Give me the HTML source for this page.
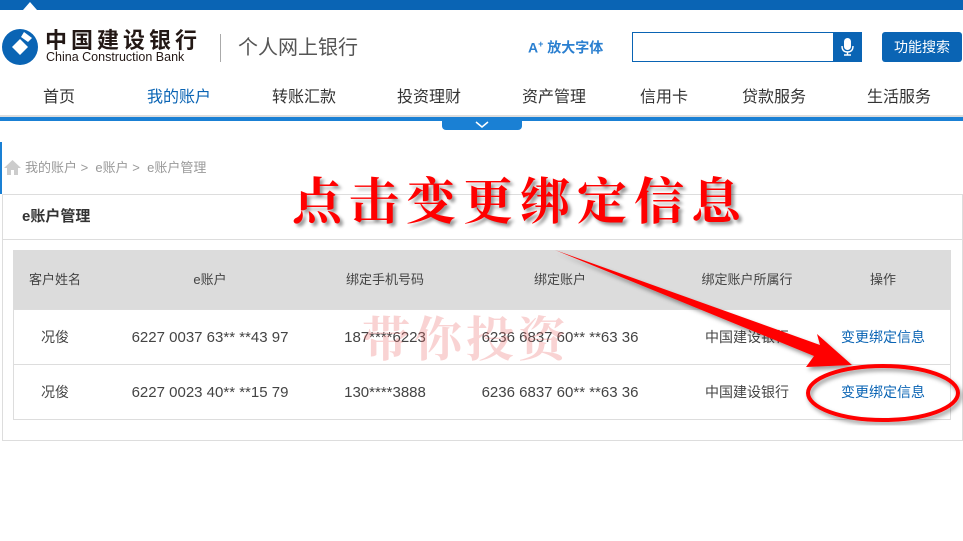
<!DOCTYPE html>
<html><head><meta charset="utf-8"><style>
*{margin:0;padding:0;box-sizing:border-box}
body{width:963px;height:541px;background:#fff;position:relative;overflow:hidden;font-family:"Liberation Sans","Noto Sans CJK SC",sans-serif;color:#333;line-height:1}
.a{position:absolute;white-space:nowrap}
.nav{font-size:16px;color:#333;top:90px}
.c{position:absolute;transform:translateX(-50%);white-space:nowrap;font-size:15px;color:#444}
</style></head><body>
<div class="a" style="left:0;top:0;width:963px;height:10px;background:#0a64b4"></div>
<div class="a" style="left:23px;top:2px;width:0;height:0;border-left:7px solid transparent;border-right:7px solid transparent;border-bottom:8px solid #fff"></div>
<svg class="a" style="left:2px;top:29px" width="36" height="36" viewBox="0 0 36 36"><circle cx="18" cy="18" r="18" fill="#0a64b4"/><path d="M10 18 L18 10 L26 18 L18 26Z" fill="#fff"/><path d="M22 3 L30 9 L26 13 L19 8Z" fill="#fff"/></svg>
<div class="a" style="left:45px;top:30px;font-size:22px;font-weight:bold;color:#231815;letter-spacing:4px">中国建设银行</div>
<div class="a" style="left:46px;top:51px;font-size:12.5px;color:#231815">China Construction Bank</div>
<div class="a" style="left:220px;top:34px;width:1px;height:28px;background:#aaa"></div>
<div class="a" style="left:238px;top:38px;font-size:20px;color:#555">个人网上银行</div>
<div class="a" style="left:528px;top:40px;font-size:14px;font-weight:bold;color:#2a7fd0">A<sup style="font-size:9px">+</sup> 放大字体</div>
<div class="a" style="left:632px;top:32px;width:230px;height:30px;border:1px solid #0a64b4"></div>
<div class="a" style="left:833px;top:32px;width:29px;height:30px;background:#0a64b4"></div>
<svg class="a" style="left:840px;top:37px" width="15" height="20" viewBox="0 0 15 20"><rect x="4" y="1" width="7" height="12" rx="3.5" fill="#fff"/><path d="M2 9 Q2 15 7.5 15 Q13 15 13 9 M7.5 15 V18 M4 18 H11" stroke="#fff" stroke-width="1.4" fill="none"/></svg>
<div class="a" style="left:882px;top:32px;width:80px;height:30px;background:#0a64b4;border-radius:3px;color:#fff;font-size:14px;line-height:30px;text-align:center">功能搜索</div>
<div class="a nav" style="left:43px">首页</div>
<div class="a nav" style="left:147px;color:#0a64b4">我的账户</div>
<div class="a nav" style="left:272px">转账汇款</div>
<div class="a nav" style="left:397px">投资理财</div>
<div class="a nav" style="left:522px">资产管理</div>
<div class="a nav" style="left:640px">信用卡</div>
<div class="a nav" style="left:742px">贷款服务</div>
<div class="a nav" style="left:867px">生活服务</div>
<div class="a" style="left:0;top:115px;width:963px;height:2px;background:#ddd"></div>
<div class="a" style="left:0;top:117px;width:963px;height:4px;background:#1a80d4"></div>
<div class="a" style="left:442px;top:120px;width:80px;height:10px;background:#1a80d4;border-radius:0 0 4px 4px"></div>
<svg class="a" style="left:474px;top:121px" width="16" height="8"><path d="M2 1 L8 6 L14 1" stroke="#fff" stroke-width="1.5" fill="none"/></svg>
<div class="a" style="left:0;top:142px;width:2px;height:52px;background:#1a80d4"></div>
<svg class="a" style="left:4px;top:160px" width="17" height="15"><path d="M8.5 0 L17 8 H14 V15 H10 V10 H7 V15 H3 V8 H0Z" fill="#ccc"/></svg>
<div class="a" style="left:25px;top:161px;font-size:13px;color:#999">我的账户 &gt; &nbsp;e账户 &gt; &nbsp;e账户管理</div>
<div class="a" style="left:2px;top:194px;width:961px;height:247px;border:1px solid #ddd"></div>
<div class="a" style="left:2px;top:239px;width:961px;height:1px;background:#ddd"></div>
<div class="a" style="left:22px;top:209px;font-size:15px;font-weight:bold;color:#333">e账户管理</div>
<div class="a" style="left:13px;top:250px;width:938px;height:170px;border:1px solid #ddd"></div>
<div class="a" style="left:13px;top:250px;width:938px;height:59px;background:#dcdcdc"></div>
<div class="a" style="left:13px;top:364px;width:938px;height:1px;background:#ddd"></div>
<div class="a" style="left:13px;top:309px;width:938px;height:1px;background:#ddd"></div>
<div class="c" style="left:55px;top:273px;font-size:13px">客户姓名</div>
<div class="c" style="left:210px;top:273px;font-size:13px">e账户</div>
<div class="c" style="left:385px;top:273px;font-size:13px">绑定手机号码</div>
<div class="c" style="left:560px;top:273px;font-size:13px">绑定账户</div>
<div class="c" style="left:747px;top:273px;font-size:13px">绑定账户所属行</div>
<div class="c" style="left:883px;top:273px;font-size:13px">操作</div>
<div class="c" style="left:55px;top:330px;font-size:14px">况俊</div>
<div class="c" style="left:210px;top:330px">6227 0037 63** **43 97</div>
<div class="c" style="left:385px;top:330px">187****6223</div>
<div class="c" style="left:560px;top:330px">6236 6837 60** **63 36</div>
<div class="c" style="left:747px;top:330px;font-size:14px">中国建设银行</div>
<div class="c" style="left:883px;top:330px;font-size:14px;color:#0a64b4">变更绑定信息</div>
<div class="c" style="left:55px;top:385px;font-size:14px">况俊</div>
<div class="c" style="left:210px;top:385px">6227 0023 40** **15 79</div>
<div class="c" style="left:385px;top:385px">130****3888</div>
<div class="c" style="left:560px;top:385px">6236 6837 60** **63 36</div>
<div class="c" style="left:747px;top:385px;font-size:14px">中国建设银行</div>
<div class="c" style="left:883px;top:385px;font-size:14px;color:#0a64b4">变更绑定信息</div>
<div class="a" style="left:362px;top:312px;font-size:48px;font-weight:bold;color:rgba(235,110,110,0.3);font-family:'Noto Serif CJK SC',serif;letter-spacing:4px">带你投资</div>
<div class="a" style="left:292px;top:173px;font-size:50px;font-weight:bold;color:#f00;letter-spacing:7px;text-shadow:3px 3px 3px rgba(0,0,0,0.4);font-family:'Noto Serif CJK SC',serif">点击变更绑定信息</div>
<svg class="a" style="left:0;top:0" width="963" height="541">
<defs><filter id="s"><feDropShadow dx="2" dy="3" stdDeviation="2" flood-opacity="0.4"/></filter></defs>
<path d="M555 250 L820 345 L817 334 L852 365 L806 367 L814 356 Z" fill="#f00" filter="url(#s)"/>
<ellipse cx="883" cy="393" rx="75" ry="27" fill="none" stroke="#f00" stroke-width="4" filter="url(#s)"/>
</svg>
</body></html>
